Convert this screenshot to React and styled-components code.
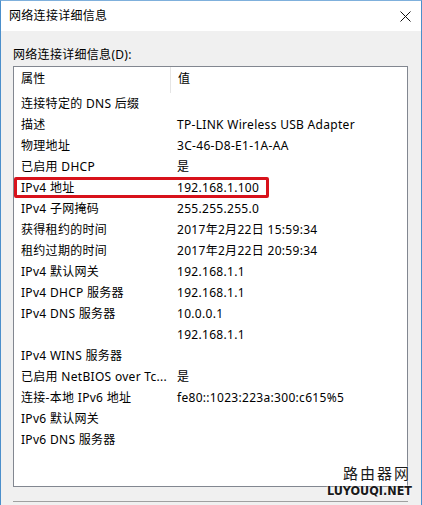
import React from 'react'
import styled, { createGlobalStyle } from 'styled-components'

const GlobalStyle = createGlobalStyle`
  html, body {
    margin: 0;
    padding: 0;
    background: #f0f0f0;
  }
  body {
    font-family: "Noto Sans", "Noto Sans CJK SC", sans-serif;
    font-size: 12px;
    letter-spacing: 0.3px;
    color: #000;
  }
`

const Window = styled.div`
  position: relative;
  width: 422px;
  height: 505px;
  box-sizing: border-box;
  border-left: 1px solid #4b8fcb;
  border-right: 1px solid #4b8fcb;
  border-top: 1px solid #7fb0dc;
  background: #f0f0f0;
  overflow: hidden;
  display: flex;
  flex-direction: column;
`

const TitleBar = styled.div`
  height: 30px;
  flex: none;
  background: #fff;
  display: flex;
  align-items: center;
  justify-content: space-between;
  padding: 0 10px 0 8px;
`

const Title = styled.span`
  font-size: 12px;
  line-height: 16px;
`

const CloseButton = styled.div`
  width: 12px;
  height: 12px;
  display: flex;
  align-items: center;
  justify-content: center;
`

const Body = styled.div`
  padding: 16px 13px 0 12px;
  display: flex;
  flex-direction: column;
`

const Label = styled.div`
  line-height: 16px;
  margin-bottom: 3px;
`

const ListBox = styled.div`
  width: 395px;
  height: 421px;
  box-sizing: border-box;
  border: 1px solid #828790;
  background: #fff;
`

const HeaderRow = styled.div`
  display: flex;
  height: 26px;
`

const HeaderCell = styled.div`
  width: ${p => p.$width || 'auto'};
  flex: ${p => (p.$width ? 'none' : '1')};
  box-sizing: border-box;
  padding-left: 7px;
  line-height: 24px;
  border-right: ${p => (p.$divider ? '1px solid #e5e5e5' : 'none')};
`

const Row = styled.div`
  position: relative;
  display: flex;
  height: 21px;
  line-height: 21px;

  &::after {
    content: '';
    display: ${p => (p.$highlight ? 'block' : 'none')};
    position: absolute;
    left: 0;
    top: 0;
    width: 255px;
    height: 21px;
    box-sizing: border-box;
    border: 3px solid #d8121b;
    border-radius: 2px;
  }
`

const NameCell = styled.div`
  width: 157px;
  flex: none;
  padding-left: 7px;
  box-sizing: border-box;
  white-space: nowrap;
  overflow: hidden;
`

const ValueCell = styled.div`
  flex: 1;
  padding-left: 6px;
  white-space: nowrap;
`

const Separator = styled.div`
  margin-top: 14px;
  width: 395px;
  height: 1px;
  background: #a0a0a0;
`

const Watermark = styled.div`
  position: absolute;
  right: 11px;
  bottom: 7px;
  display: flex;
  flex-direction: column;
  align-items: flex-end;
  color: #1a1a1a;
  letter-spacing: 0;
  text-shadow: 0 0 2px #fff, 0 0 2px #fff;
`

const WatermarkCn = styled.div`
  font-family: "Noto Sans CJK SC", sans-serif;
  font-size: 15px;
  line-height: 17px;
  letter-spacing: 2px;
  margin-right: -1px;
`

const WatermarkEn = styled.div`
  font-family: "DejaVu Sans Condensed", "DejaVu Sans", sans-serif;
  font-size: 12.5px;
  font-weight: 600;
  line-height: 14px;
  margin-top: 3px;
  margin-right: -2px;
`

const rows = [
  ['连接特定的 DNS 后缀', ''],
  ['描述', 'TP-LINK Wireless USB Adapter'],
  ['物理地址', '3C-46-D8-E1-1A-AA'],
  ['已启用 DHCP', '是'],
  ['IPv4 地址', '192.168.1.100', true],
  ['IPv4 子网掩码', '255.255.255.0'],
  ['获得租约的时间', '2017年2月22日 15:59:34'],
  ['租约过期的时间', '2017年2月22日 20:59:34'],
  ['IPv4 默认网关', '192.168.1.1'],
  ['IPv4 DHCP 服务器', '192.168.1.1'],
  ['IPv4 DNS 服务器', '10.0.0.1'],
  ['', '192.168.1.1'],
  ['IPv4 WINS 服务器', ''],
  ['已启用 NetBIOS over Tc...', '是'],
  ['连接-本地 IPv6 地址', 'fe80::1023:223a:300:c615%5'],
  ['IPv6 默认网关', ''],
  ['IPv6 DNS 服务器', ''],
]

const App = () => {
  return (
    <>
      <GlobalStyle />
      <Window>
        <TitleBar>
          <Title>网络连接详细信息</Title>
          <CloseButton>
            <svg width="11" height="11" viewBox="0 0 11 11">
              <path d="M0.5 0.5 L10.5 10.5 M10.5 0.5 L0.5 10.5" stroke="#111" strokeWidth="1" fill="none" />
            </svg>
          </CloseButton>
        </TitleBar>
        <Body>
          <Label>网络连接详细信息(D):</Label>
          <ListBox>
            <HeaderRow>
              <HeaderCell $width="157px" $divider>属性</HeaderCell>
              <HeaderCell>值</HeaderCell>
            </HeaderRow>
            {rows.map(([name, value, hl], i) => (
              <Row key={i} $highlight={hl}>
                <NameCell>{name}</NameCell>
                <ValueCell>{value}</ValueCell>
              </Row>
            ))}
          </ListBox>
          <Separator />
        </Body>
        <Watermark>
          <WatermarkCn>路由器网</WatermarkCn>
          <WatermarkEn>LUYOUQI.NET</WatermarkEn>
        </Watermark>
      </Window>
    </>
  )
}

export default App
